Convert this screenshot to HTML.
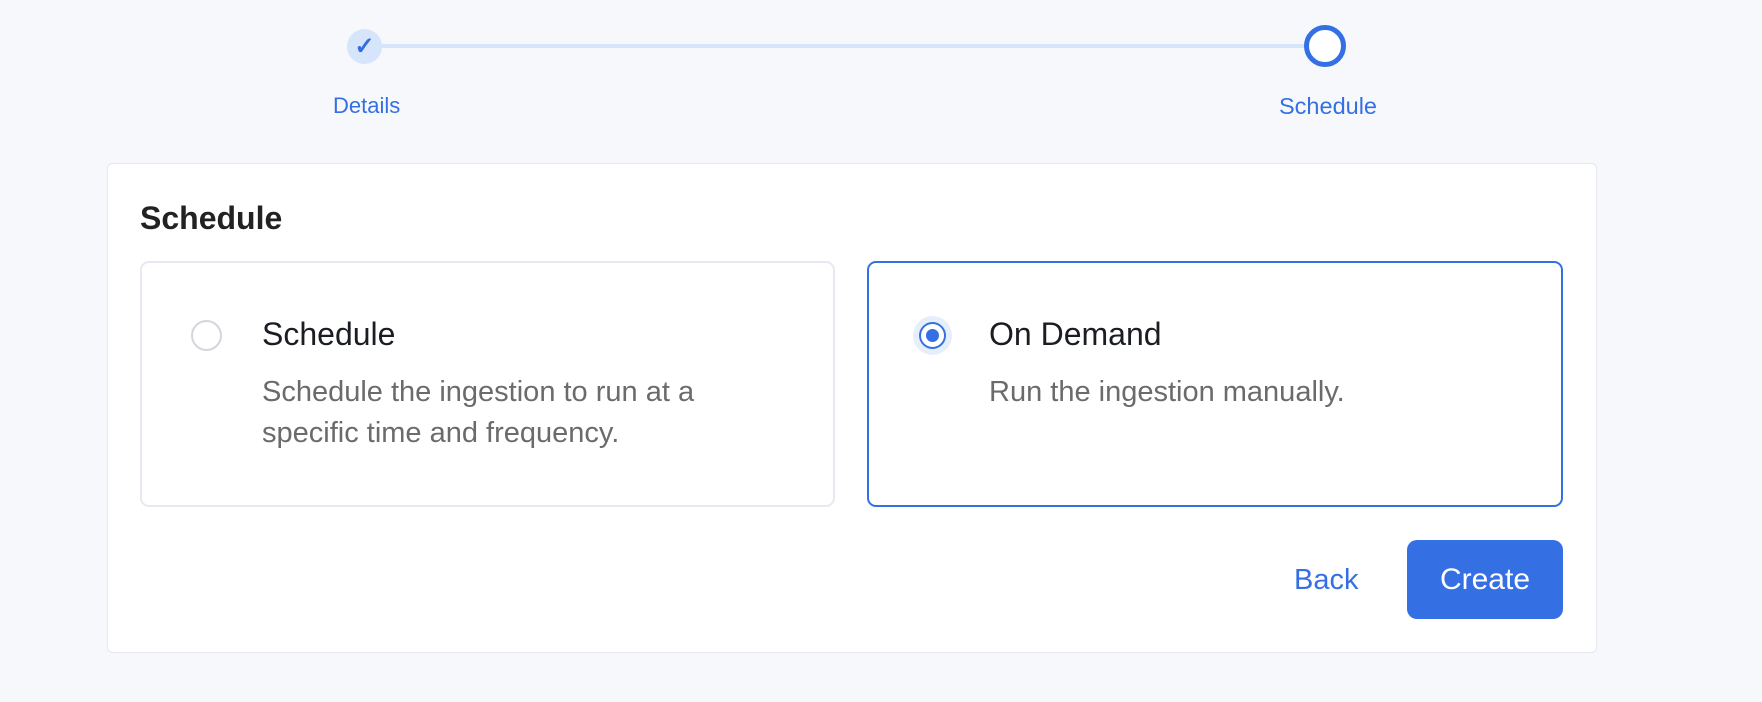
<!DOCTYPE html>
<html><head><style>
*{margin:0;padding:0;box-sizing:border-box}
body{width:1762px;height:702px;background:#f7f8fb;font-family:"Liberation Sans",sans-serif;position:relative;overflow:hidden}
.a{position:absolute}
.line{left:380px;top:44px;width:926px;height:4px;background:#d6e5f9}
.c1{left:347px;top:29px;width:35px;height:35px;border-radius:50%;background:#d6e5fb;color:#336ee0;font-size:24px;text-align:center;line-height:35px;font-weight:bold}
.c2{left:1304px;top:25px;width:42px;height:42px;border-radius:50%;border:5px solid #3470e4;background:#fff}
.lbl{color:#3470e4;font-size:22px;top:93px}
.panel{left:107px;top:163px;width:1490px;height:490px;background:#fff;border:1.5px solid #e6e8ef;border-radius:6px}
h2{position:absolute;left:140px;top:200px;font-size:32px;font-weight:bold;color:#222}
.card{top:261px;height:246px;background:#fff;border-radius:9px}
.t{font-size:32px;color:#1b1d24}
.d{font-size:29px;color:#6b6b6b;line-height:41px}
</style></head><body>
<div class="a line"></div>
<div class="a c1">✓</div>
<div class="a c2"></div>
<div class="a lbl" style="left:333px">Details</div>
<div class="a lbl" style="left:1279px;font-size:23.5px">Schedule</div>
<div class="a panel"></div>
<h2>Schedule</h2>
<div class="a card" style="left:140px;width:695px;border:2px solid #e8e8f1"></div>
<div class="a card" style="left:867px;width:696px;border:2px solid #3470e4"></div>
<div class="a" style="left:191px;top:320px;width:31px;height:31px;border-radius:50%;border:2px solid #d5d5db;background:#fff"></div>
<div class="a" style="left:913px;top:316px;width:39px;height:39px;border-radius:50%;background:#e6eefc"></div>
<div class="a" style="left:919px;top:322px;width:27px;height:27px;border-radius:50%;border:2px solid #3470e4;background:#fff"></div>
<div class="a" style="left:926px;top:329px;width:13px;height:13px;border-radius:50%;background:#3470e4"></div>
<div class="a t" style="left:262px;top:316px">Schedule</div>
<div class="a d" style="left:262px;top:372px">Schedule the ingestion to run at a<br>specific time and frequency.</div>
<div class="a t" style="left:989px;top:316px">On Demand</div>
<div class="a d" style="left:989px;top:372px">Run the ingestion manually.</div>
<div class="a" style="left:1294px;top:564px;font-size:29px;color:#3470e4">Back</div>
<div class="a" style="left:1407px;top:540px;width:156px;height:79px;border-radius:10px;background:#3470e4;color:#fff;font-size:30px;text-align:center;line-height:79px">Create</div>
</body></html>
